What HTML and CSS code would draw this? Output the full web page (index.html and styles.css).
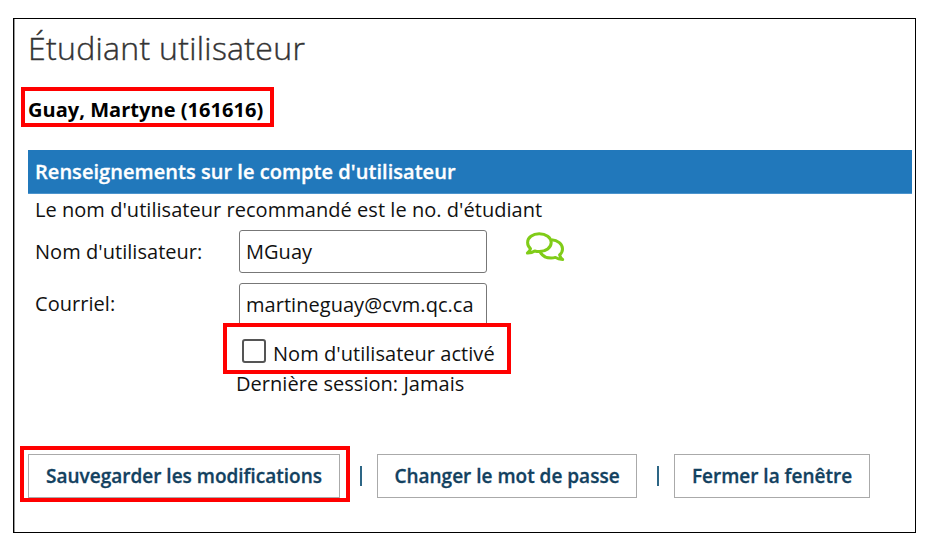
FILE: index.html
```
<!DOCTYPE html>
<html lang="fr">
<head>
    <meta charset="utf-8">
    <title>Étudiant utilisateur</title>
    <link rel="stylesheet" href="styles.css">
</head>
<body>
    <div class="window">
        <h1>Étudiant utilisateur</h1>
        <div class="student">Guay, Martyne (161616)</div>

        <h2>Renseignements sur le compte d'utilisateur</h2>
        <p class="hint">Le nom d'utilisateur recommandé est le no. d'étudiant</p>

        <div class="row">
            <label for="username">Nom d'utilisateur:</label>
            <input type="text" id="username" value="MGuay">
            <svg class="chat" width="40" height="32" viewBox="0 0 40 32">
                <path d="M14.2 2.700C7.700 2.700 2.600 6.500 2.600 11.500c0 2.400 1.100 4.500 2.900 6.100-.4 1.900-1.600 3.500-3.100 4.500 3 .1 5.400-.7 7.300-2.100 1.400.4 2.900.6 4.500.6 6.700 0 12-4 12-9.000s-5.300-8.900-12-8.900z"/>
                <path d="M26.500 8.800c6.200.3 11 4.200 11 9.100 0 2.300-1.100 4.400-2.900 6 .4 1.900 1.500 3.500 3 4.600-2.800 0-5.300-.7-7.200-2.100-1.400.4-2.800.6-4.300.6-4.900 0-9.100-2.300-10.900-6"/>
            </svg>
        </div>
        <div class="row email">
            <label for="email">Courriel:</label>
            <input type="text" id="email" value="martineguay@cvm.qc.ca">
        </div>
        <div class="active">
            <input type="checkbox" id="active">
            <label for="active">Nom d'utilisateur activé</label>
        </div>
        <p class="session">Dernière session: Jamais</p>

        <div class="buttons">
            <button class="save">Sauvegarder les modifications</button>
            <i></i>
            <button class="password">Changer le mot de passe</button>
            <i></i>
            <button class="close">Fermer la fenêtre</button>
        </div>
    </div>

    <!-- Cadres rouges -->
    <div class="mark mark-student"></div>
    <div class="mark mark-save"></div>
</body>
</html>
```
FILE: styles.css
```
* {
    box-sizing: border-box;
}
body {
    margin: 0;
    padding: 18px 0 0 13px;
    background: #fff;
    color: #111;
    font: 20px "Open Sans", sans-serif;
    letter-spacing: 0.04px;
    overflow: hidden;
}
h1, h2, p {
    margin: 0;
}
.window {
    width: 903px;
    height: 515px;
    padding: 0 3px 0 14px;
    border: 1px solid #000;
    box-shadow: inset 1px 0 #999;
}
h1 {
    font-size: 32px;
    font-weight: 300;
    line-height: 58px;
    letter-spacing: 0.3px;
    color: #333;
    -webkit-text-stroke: 0.4px #333;
}
.student {
    line-height: 65px;
    margin-bottom: 8px;
    font-weight: 700;
    color: #000;
}
h2 {
    height: 44px;
    padding-left: 7px;
    border-bottom: 1px solid #4c94cd;
    background: #2178bb;
    color: #fff;
    font-size: 20px;
    font-weight: 600;
    line-height: 44px;
    -webkit-text-stroke: 0.3px #fff;
}
.hint {
    padding-left: 7px;
    line-height: 31px;
    margin-bottom: 5px;
}
.row {
    display: flex;
    height: 43px;
    margin-bottom: 10px;
}
.row label {
    width: 211px;
    padding-left: 7px;
    line-height: 43px;
}
.row.email label {
    line-height: 41px;
}
.row input {
    width: 248px;
    height: 43px;
    padding: 0 5px 1px 6px;
    border: 1px solid #777;
    border-radius: 3px;
    font: inherit;
    letter-spacing: inherit;
    color: inherit;
}
.chat {
    margin: 1px 0 0 38px;
    fill: none;
    stroke: #80cc18;
    stroke-width: 3;
    stroke-linejoin: round;
}
/* recouvre le bas du champ Courriel */
.active {
    position: relative;
    display: flex;
    width: 288px;
    height: 51px;
    margin: -13px 0 0 195px;
    padding: 12px 0 0 15px;
    border: 4px solid #f00;
    background: #fff;
}
.active input {
    appearance: none;
    width: 24px;
    height: 24px;
    margin: 0;
    border: 2px solid #555;
    border-radius: 3px;
}
.active label {
    margin-left: 7px;
    line-height: 30px;
}
.session {
    padding-left: 208px;
    line-height: 20px;
    margin-bottom: 60px;
}
.buttons {
    display: flex;
    align-items: center;
}
.buttons i {
    width: 2px;
    height: 20px;
    margin: 0 15px 0 20px;
    background: #2d6685;
}
button {
    height: 44px;
    padding: 0;
    border: 1px solid #aaa;
    background: #fff;
    color: #12415f;
    font: 600 19px "Open Sans", sans-serif;
    -webkit-text-stroke: 0.3px #12415f;
}
.save {
    width: 312px;
}
.password {
    width: 260px;
}
.close {
    width: 196px;
}
.mark {
    position: absolute;
    border: 4px solid #f00;
}
.mark-student {
    left: 21px;
    top: 87px;
    width: 253px;
    height: 40px;
}
.mark-save {
    left: 20px;
    top: 446px;
    width: 330px;
    height: 56px;
}
```
